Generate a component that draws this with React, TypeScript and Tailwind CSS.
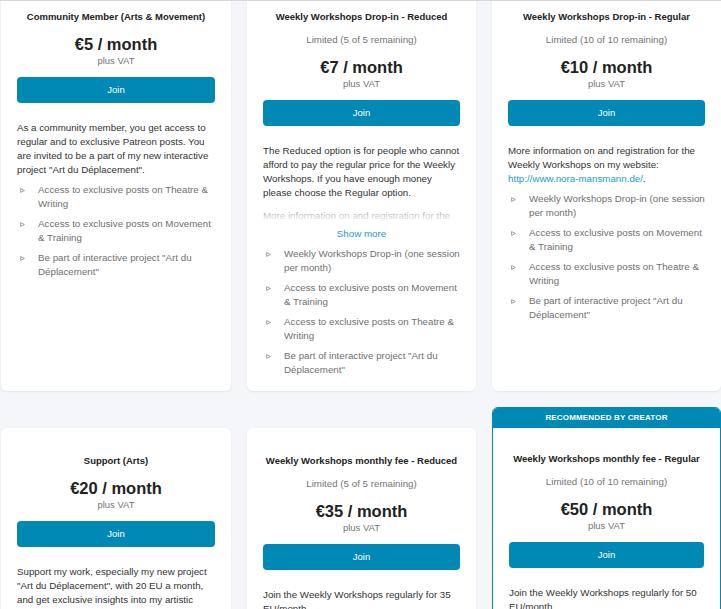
import type { ReactNode } from 'react';

interface Tier {
  title: string;
  limited?: string;
  price: string;
  description: ReactNode;
  collapsed?: boolean;
  benefits: string[];
  recommended?: boolean;
}

const topRow: Tier[] = [
  {
    title: 'Community Member (Arts & Movement)',
    price: '€5 / month',
    description: (
      <p>
        As a community member, you get access to regular and to exclusive Patreon posts. You are invited to be a
        part of my new interactive project "Art du Déplacement".
      </p>
    ),
    benefits: [
      'Access to exclusive posts on Theatre & Writing',
      'Access to exclusive posts on Movement & Training',
      'Be part of interactive project "Art du Déplacement"',
    ],
  },
  {
    title: 'Weekly Workshops Drop-in - Reduced',
    limited: 'Limited (5 of 5 remaining)',
    price: '€7 / month',
    collapsed: true,
    description: (
      <>
        <p>
          The Reduced option is for people who cannot afford to pay the regular price for the Weekly Workshops. If
          you have enough money please choose the Regular option.
        </p>
        <p className="mt-[9px]">
          More information on and registration for the Weekly Workshops on my website:{' '}
          <span className="text-[#1e9bcc]">http://www.nora-mansmann.de/</span>.
        </p>
      </>
    ),
    benefits: [
      'Weekly Workshops Drop-in (one session per month)',
      'Access to exclusive posts on Movement & Training',
      'Access to exclusive posts on Theatre & Writing',
      'Be part of interactive project "Art du Déplacement"',
    ],
  },
  {
    title: 'Weekly Workshops Drop-in - Regular',
    limited: 'Limited (10 of 10 remaining)',
    price: '€10 / month',
    description: (
      <p>
        More information on and registration for the Weekly Workshops on my website:{' '}
        <span className="text-[#1e9bcc]">http://www.nora-mansmann.de/</span>.
      </p>
    ),
    benefits: [
      'Weekly Workshops Drop-in (one session per month)',
      'Access to exclusive posts on Movement & Training',
      'Access to exclusive posts on Theatre & Writing',
      'Be part of interactive project "Art du Déplacement"',
    ],
  },
];

const bottomRow: Tier[] = [
  {
    title: 'Support (Arts)',
    price: '€20 / month',
    description: (
      <p>
        Support my work, especially my new project "Art du Déplacement", with 20 EU a month, and get exclusive
        insights into my artistic work and process.
      </p>
    ),
    benefits: ['Access to exclusive posts on Theatre & Writing'],
  },
  {
    title: 'Weekly Workshops monthly fee - Reduced',
    limited: 'Limited (5 of 5 remaining)',
    price: '€35 / month',
    description: <p>Join the Weekly Workshops regularly for 35 EU/month.</p>,
    benefits: ['Weekly Workshops (four sessions per month)'],
  },
  {
    title: 'Weekly Workshops monthly fee - Regular',
    limited: 'Limited (10 of 10 remaining)',
    price: '€50 / month',
    recommended: true,
    description: <p>Join the Weekly Workshops regularly for 50 EU/month.</p>,
    benefits: ['Weekly Workshops (four sessions per month)'],
  },
];

function Bullet() {
  return (
    <svg className="mt-[5px] h-[5px] w-[5px] shrink-0 text-[#8a8a8a]" viewBox="0 0 5 5" fill="none">
      <path d="M0.6 0.6 L4.4 2.5 L0.6 4.4 Z" stroke="currentColor" strokeWidth="0.8" strokeLinejoin="round" />
    </svg>
  );
}

function TierCard({ tier }: { tier: Tier }) {
  const body = (
    <div className={`flex h-full flex-col px-4 pb-[14px] ${tier.recommended ? 'pt-[24px]' : 'pt-[26px]'}`}>
      <h3 className="text-center text-[9.5px] leading-[14px] font-bold text-[#222]">{tier.title}</h3>
      {tier.limited && (
        <p className="mt-[9px] text-center text-[9.75px] leading-[14px] text-[#757575]">{tier.limited}</p>
      )}
      <p className="mt-[9px] text-center text-[16.5px] leading-[22px] font-bold text-[#222]">{tier.price}</p>
      <p className="text-center text-[9.5px] leading-[12px] text-[#757575]">plus VAT</p>
      <button className="mt-[10px] h-[26px] w-full rounded-[4px] bg-[#0089b5] text-[9.5px] text-white">Join</button>
      <div className="mt-[18px] text-[9.75px] leading-[14px] text-[#333]">
        {tier.collapsed ? (
          <>
            <div className="relative h-[79px] overflow-hidden">
              {tier.description}
              <div className="absolute inset-x-0 bottom-0 h-[16px] bg-gradient-to-b from-white/40 to-white" />
            </div>
            <p className="mt-[4px] text-center text-[#1e9bcc]">Show more</p>
          </>
        ) : (
          tier.description
        )}
      </div>
      <ul className="mt-[6px] flex flex-col gap-[6px]">
        {tier.benefits.map((b) => (
          <li key={b} className="flex gap-[13px] pl-[3px] text-[9.75px] leading-[14px] text-[#707070]">
            <Bullet />
            <span>{b}</span>
          </li>
        ))}
      </ul>
    </div>
  );

  if (tier.recommended) {
    return (
      <div className="flex flex-col overflow-hidden rounded-md border border-[#0089b5] bg-white shadow-[0_1px_2px_rgba(0,0,0,0.08)]">
        <div className="h-[20px] bg-[#0089b5] text-center text-[8px] leading-[20px] font-bold tracking-[0.02em] text-white">
          RECOMMENDED BY CREATOR
        </div>
        <div className="flex-1">{body}</div>
      </div>
    );
  }

  return <div className="rounded-md bg-white shadow-[0_1px_2px_rgba(0,0,0,0.08)]">{body}</div>;
}

export default function App() {
  return (
    <div
      className="relative h-[609px] w-[721px] overflow-hidden bg-[#f5f6fa]"
      style={{ fontFamily: '"Liberation Sans", Arial, sans-serif' }}
    >
      <div className="-mt-4 grid grid-cols-[230px_229px_229px] gap-x-4 gap-y-[16px] pl-px">
        {topRow.map((t) => (
          <TierCard key={t.title} tier={t} />
        ))}
        {bottomRow.map((t) => (
          <div key={t.title} className={t.recommended ? '' : 'pt-[21px]'}>
            <TierCard tier={t} />
          </div>
        ))}
      </div>
      <div className="absolute inset-x-0 top-0 h-px bg-[#d6d6d6]" />
    </div>
  );
}
